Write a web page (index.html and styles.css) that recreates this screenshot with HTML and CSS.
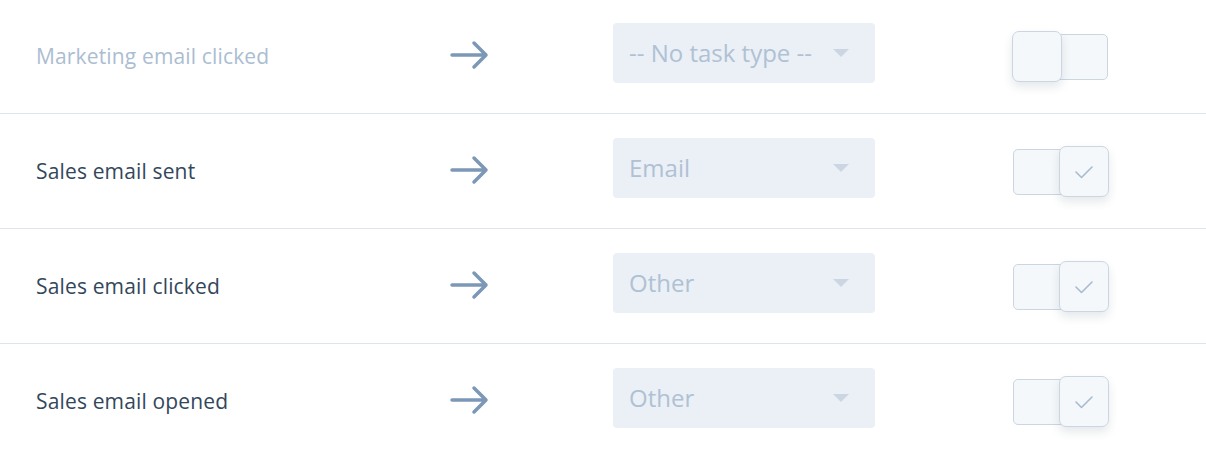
FILE: index.html
```html
<!DOCTYPE html>
<html lang="en">
<head>
    <meta charset="UTF-8">
    <meta name="viewport" content="width=device-width, initial-scale=1.0">
    <title>Task types</title>
    <link rel="stylesheet" href="styles.css">
</head>
<body>
    <div class="rules">
        <div class="rule">
            <div class="rule-name muted">Marketing email clicked</div>
            <div class="arrow">
                <svg width="40" height="30" viewBox="0 0 40 30"><path d="M2 15 H36 M24 3 L36 15 L24 27" fill="none" stroke="#7c98b6" stroke-width="3.5" stroke-linecap="round" stroke-linejoin="round"/></svg>
            </div>
            <div class="select"><span>-- No task type --</span><span class="caret"></span></div>
            <div class="toggle"><span class="knob"></span></div>
        </div>
        <div class="rule">
            <div class="rule-name">Sales email sent</div>
            <div class="arrow">
                <svg width="40" height="30" viewBox="0 0 40 30"><path d="M2 15 H36 M24 3 L36 15 L24 27" fill="none" stroke="#7c98b6" stroke-width="3.5" stroke-linecap="round" stroke-linejoin="round"/></svg>
            </div>
            <div class="select wide"><span>Email</span><span class="caret"></span></div>
            <div class="toggle on"><span class="knob"><svg width="20" height="16" viewBox="0 0 20 16"><path d="M2 8 L7.5 13.5 L18 3" fill="none" stroke="#a8bbd0" stroke-width="1.6" stroke-linecap="round" stroke-linejoin="round"/></svg></span></div>
        </div>
        <div class="rule">
            <div class="rule-name">Sales email clicked</div>
            <div class="arrow">
                <svg width="40" height="30" viewBox="0 0 40 30"><path d="M2 15 H36 M24 3 L36 15 L24 27" fill="none" stroke="#7c98b6" stroke-width="3.5" stroke-linecap="round" stroke-linejoin="round"/></svg>
            </div>
            <div class="select wide"><span>Other</span><span class="caret"></span></div>
            <div class="toggle on"><span class="knob"><svg width="20" height="16" viewBox="0 0 20 16"><path d="M2 8 L7.5 13.5 L18 3" fill="none" stroke="#a8bbd0" stroke-width="1.6" stroke-linecap="round" stroke-linejoin="round"/></svg></span></div>
        </div>
        <div class="rule last">
            <div class="rule-name">Sales email opened</div>
            <div class="arrow">
                <svg width="40" height="30" viewBox="0 0 40 30"><path d="M2 15 H36 M24 3 L36 15 L24 27" fill="none" stroke="#7c98b6" stroke-width="3.5" stroke-linecap="round" stroke-linejoin="round"/></svg>
            </div>
            <div class="select wide"><span>Other</span><span class="caret"></span></div>
            <div class="toggle on"><span class="knob"><svg width="20" height="16" viewBox="0 0 20 16"><path d="M2 8 L7.5 13.5 L18 3" fill="none" stroke="#a8bbd0" stroke-width="1.6" stroke-linecap="round" stroke-linejoin="round"/></svg></span></div>
        </div>
    </div>
</body>
</html>
```

FILE: styles.css
```css
body {
    margin: 0;
    background-color: #fff;
    font-family: "Open Sans", "Noto Sans", sans-serif;
    color: #33475b;
}
.rules {
    margin-top: -1px;
}
.rule {
    display: grid;
    grid-template-columns: 414px 163px 262px 1fr;
    align-items: center;
    height: 114px;
    padding-left: 36px;
    border-bottom: 1px solid #dfe3eb;
}
.rule.last {
    border-bottom: none;
}
.rule-name {
    font-size: 21px;
    letter-spacing: 0.15px;
}
.rule-name.muted {
    color: #abbdd2;
}
.arrow {
    display: flex;
    align-items: center;
    height: 30px;
    margin-bottom: 2px;
}
.select {
    display: flex;
    align-items: center;
    justify-content: space-between;
    height: 60px;
    padding: 0 26px 0 16px;
    margin-bottom: 7px;
    background-color: #eaf0f6;
    border-radius: 4px;
    color: #b0c1d4;
    font-size: 24px;
}
.caret {
    width: 0;
    height: 0;
    border-left: 8px solid transparent;
    border-right: 8px solid transparent;
    border-top: 8px solid #cbd6e2;
}
.select .caret {
    margin-left: 6px;
}
.select.wide .caret {
    margin-left: 0;
}
.toggle {
    display: flex;
    justify-content: flex-start;
    align-items: center;
    width: 93px;
    height: 44px;
    margin-left: 138px;
    margin-top: 1px;
    background-color: #f5f8fa;
    border: 1.5px solid #cbd6e2;
    border-radius: 5px;
}
.toggle.on {
    justify-content: flex-end;
}
.knob {
    display: flex;
    align-items: center;
    justify-content: center;
    flex: none;
    box-sizing: border-box;
    width: 50px;
    height: 51px;
    margin: 0 -2px;
    background-color: #f5f8fa;
    border: 1.5px solid #cbd6e2;
    border-radius: 7px;
    box-shadow: 0 5px 10px rgba(45, 62, 80, 0.12);
}
```
